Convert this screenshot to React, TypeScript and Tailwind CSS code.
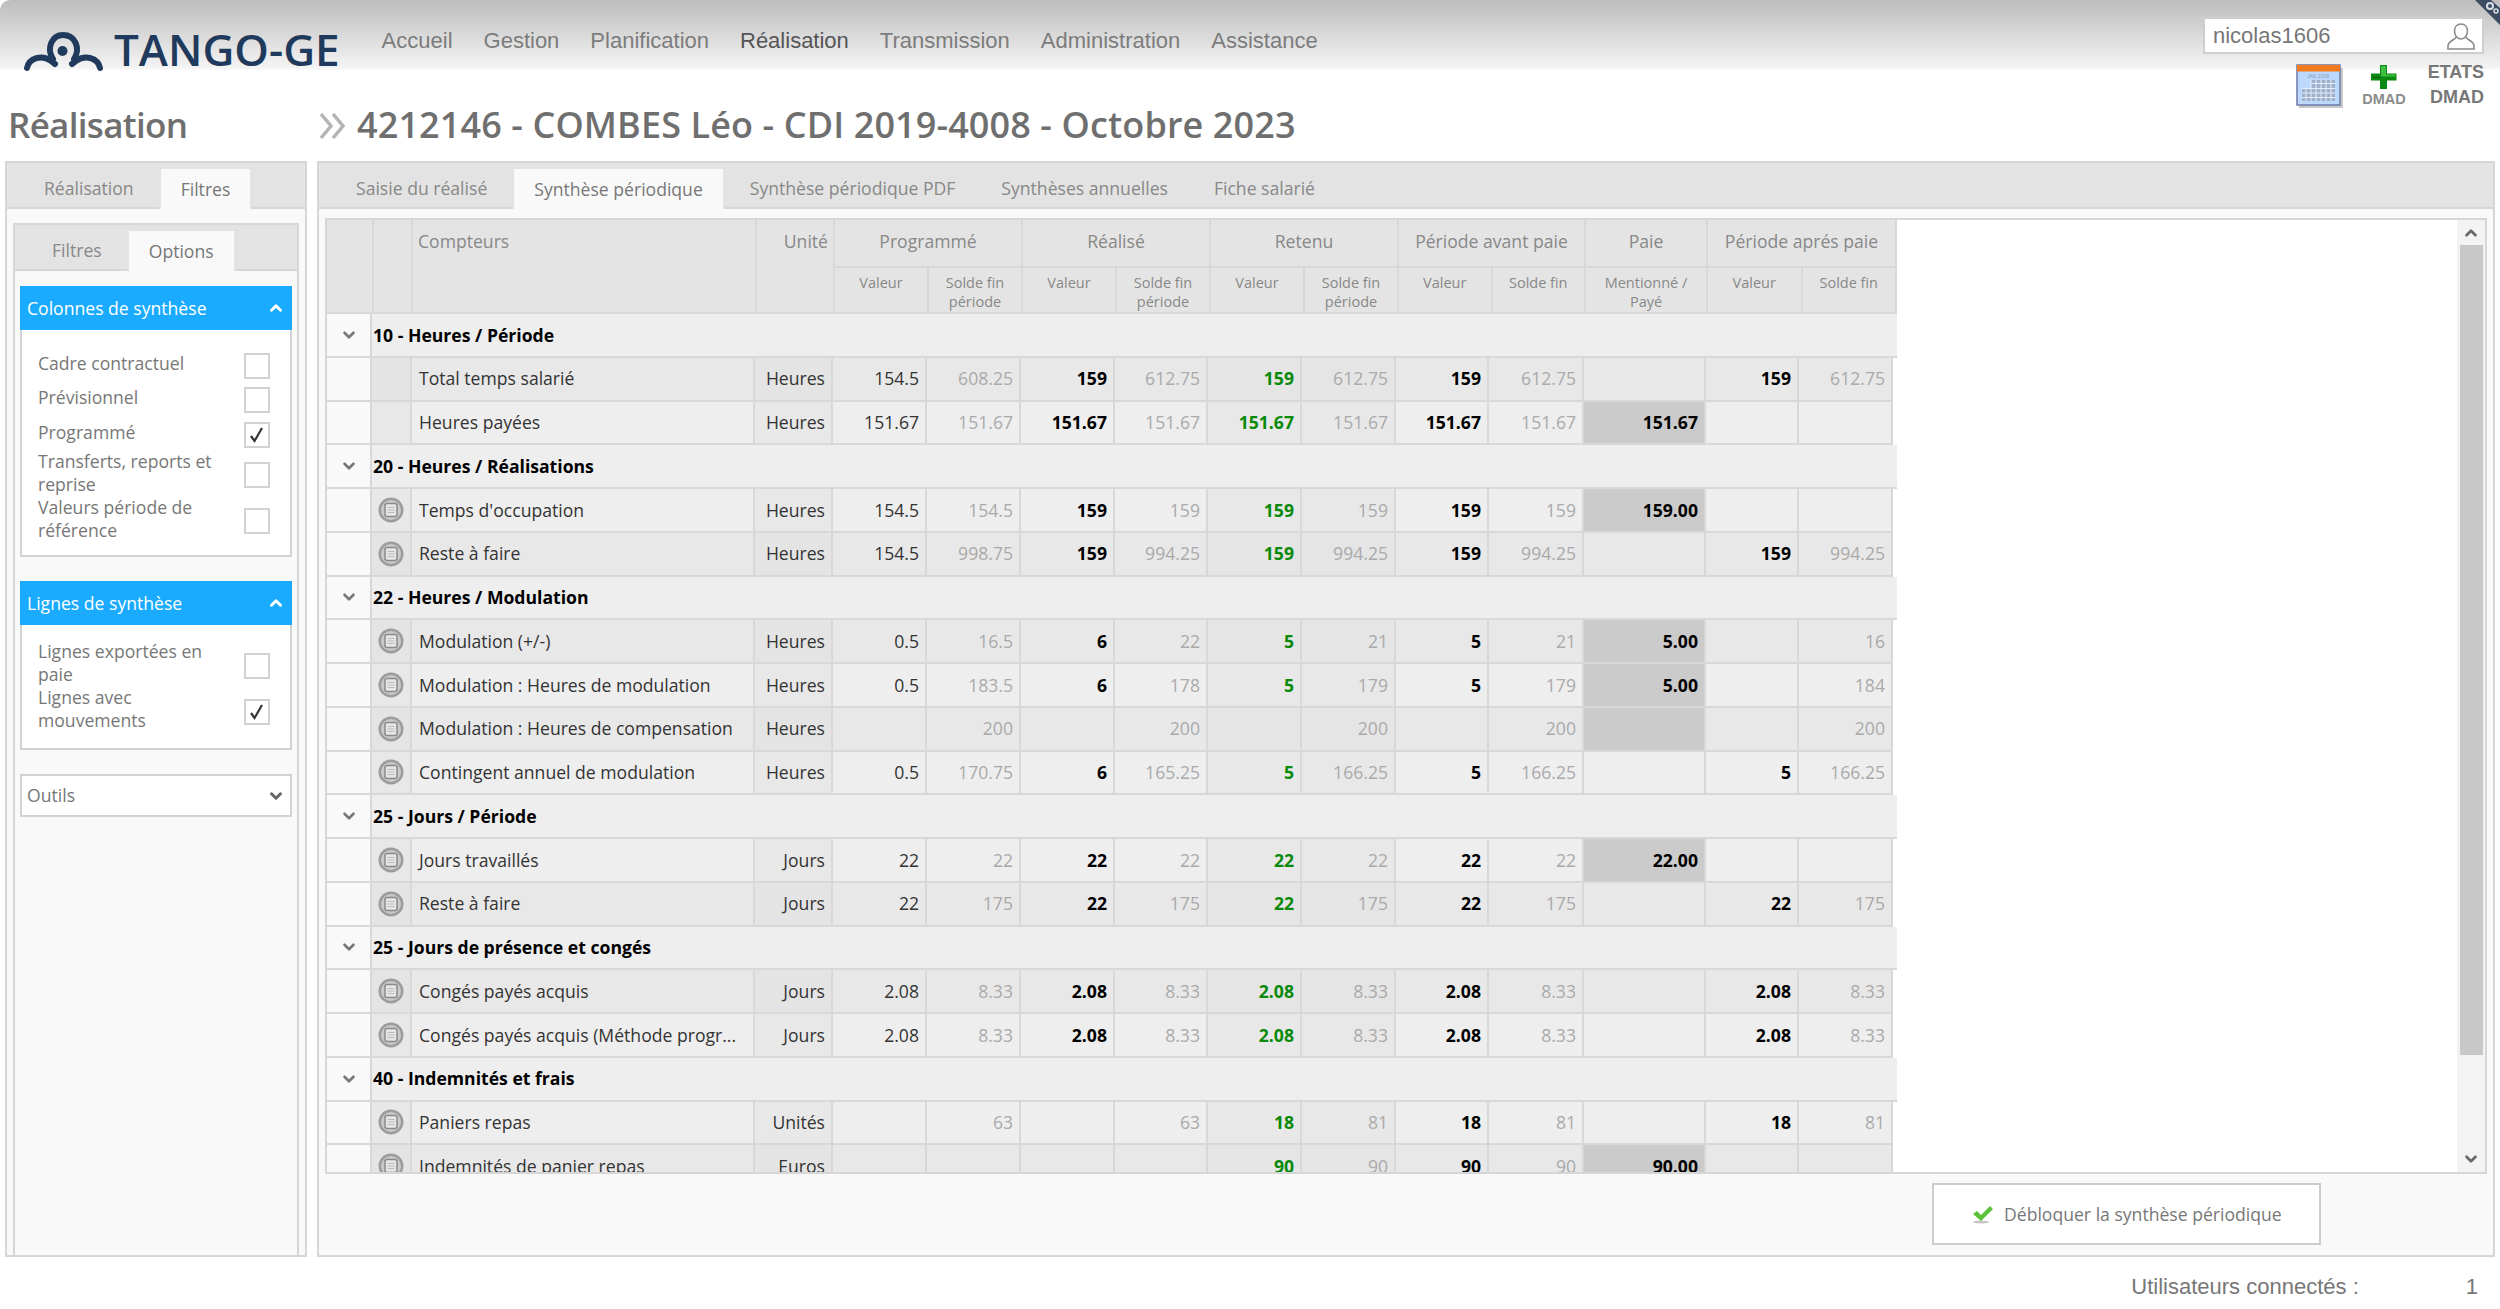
import React from 'react';
import { ChevronDown, ChevronUp } from 'lucide-react';

type Line = {
  icon?: boolean;
  name: string;
  unit: string;
  v: string[];
  paie?: string;
  gray?: boolean;
};

type Group = { title: string; lines: Line[] };

const same = (a: string, b: string) => [a, b, a, b, a, b, a, b, a, b];

const groups: Group[] = [
  {
    title: '10 - Heures / Période',
    lines: [
      { name: 'Total temps salarié', unit: 'Heures', v: ['154.5', '608.25', '159', '612.75', '159', '612.75', '159', '612.75', '159', '612.75'] },
      { name: 'Heures payées', unit: 'Heures', v: ['151.67', '151.67', '151.67', '151.67', '151.67', '151.67', '151.67', '151.67', '', ''], paie: '151.67', gray: true },
    ],
  },
  {
    title: '20 - Heures / Réalisations',
    lines: [
      { icon: true, name: "Temps d'occupation", unit: 'Heures', v: ['154.5', '154.5', '159', '159', '159', '159', '159', '159', '', ''], paie: '159.00', gray: true },
      { icon: true, name: 'Reste à faire', unit: 'Heures', v: ['154.5', '998.75', '159', '994.25', '159', '994.25', '159', '994.25', '159', '994.25'] },
    ],
  },
  {
    title: '22 - Heures / Modulation',
    lines: [
      { icon: true, name: 'Modulation (+/-)', unit: 'Heures', v: ['0.5', '16.5', '6', '22', '5', '21', '5', '21', '', '16'], paie: '5.00', gray: true },
      { icon: true, name: 'Modulation : Heures de modulation', unit: 'Heures', v: ['0.5', '183.5', '6', '178', '5', '179', '5', '179', '', '184'], paie: '5.00', gray: true },
      { icon: true, name: 'Modulation : Heures de compensation', unit: 'Heures', v: ['', '200', '', '200', '', '200', '', '200', '', '200'], gray: true },
      { icon: true, name: 'Contingent annuel de modulation', unit: 'Heures', v: ['0.5', '170.75', '6', '165.25', '5', '166.25', '5', '166.25', '5', '166.25'] },
    ],
  },
  {
    title: '25 - Jours / Période',
    lines: [
      { icon: true, name: 'Jours travaillés', unit: 'Jours', v: ['22', '22', '22', '22', '22', '22', '22', '22', '', ''], paie: '22.00', gray: true },
      { icon: true, name: 'Reste à faire', unit: 'Jours', v: ['22', '175', '22', '175', '22', '175', '22', '175', '22', '175'] },
    ],
  },
  {
    title: '25 - Jours de présence et congés',
    lines: [
      { icon: true, name: 'Congés payés acquis', unit: 'Jours', v: same('2.08', '8.33') },
      { icon: true, name: 'Congés payés acquis (Méthode progr...', unit: 'Jours', v: same('2.08', '8.33') },
    ],
  },
  {
    title: '40 - Indemnités et frais',
    lines: [
      { icon: true, name: 'Paniers repas', unit: 'Unités', v: ['', '63', '', '63', '18', '81', '18', '81', '18', '81'] },
      { icon: true, name: 'Indemnités de panier repas', unit: 'Euros', v: ['', '', '', '', '90', '90', '90', '90', '', ''], paie: '90.00', gray: true },
    ],
  },
];

const headCell = 'border-r-2 border-[#d8d8d8]';
const rowGrid = 'grid w-[1566px] grid-cols-[45px_40px_343px_78px_94px_94px_94px_93px_94px_94px_93px_95px_122px_93px_94px]';

const Logo = () => (
  <svg width="80" height="40" viewBox="0 0 80 40" fill="none">
    <path d="M3 36C5 26 18 22 27 29L31 32" stroke="#1f3a5c" strokeWidth="6" strokeLinecap="round" />
    <path d="M76 36C74 26 61 22 52 29L48 32" stroke="#1f3a5c" strokeWidth="6" strokeLinecap="round" />
    <path d="M29 27C22 16 28 3 39 3C51 3 57 16 50 27" stroke="#1f3a5c" strokeWidth="6" strokeLinecap="round" />
    <circle cx="38.5" cy="19" r="5" fill="#1f3a5c" />
  </svg>
);

const UserIcon = () => (
  <svg width="28" height="28" viewBox="0 0 28 28" fill="none" stroke="#8a8a8a" strokeWidth="1.6">
    <path d="M14 2c-4 0-6.500 3-6.500 7s2.500 8 6.500 8 6.500-4 6.500-8-2.500-7-6.500-7z" />
    <path d="M9 15c0 3-8 3.500-8 9v3h26v-3c0-5.500-8-6-8-9" />
  </svg>
);

const CalendarIcon = () => (
  <svg width="48" height="44" viewBox="0 0 48 44">
    <rect x="3" y="4" width="44" height="40" fill="#c8c8c8" />
    <rect x="1" y="1" width="43" height="40" fill="#bcd9fb" stroke="#6d7aa8" strokeWidth="1.500" />
    <rect x="1" y="1" width="43" height="6.500" fill="#f47a1f" />
    <text x="22" y="14" fontSize="5" fill="#8d9ab5" textAnchor="middle" fontFamily="Liberation Sans">JAN 2008</text>
    <path d="M6 24h29v13H6zM15 16h24v21H15z" fill="#9fb0cc" />
    <path d="M15 19.500h24M6 24.500h33M6 29h33M6 33.500h33M10 24v13M15 16v21M20 16v21M25 16v21M30 16v21M35 16v21" stroke="#e5eefb" strokeWidth="1" />
  </svg>
);

const PlusIcon = () => (
  <svg width="26" height="26" viewBox="0 0 26 26">
    <path d="M9 1h7v8.500h9.500v7H16V25H9v-8.500H0v-7h9z" fill="#0a8a12" />
    <path d="M10 2h5v8.500h9.500v2H10z" fill="#3fbf3f" />
    <path d="M2 14h7.500v-1H2z" fill="#0d5f12" />
  </svg>
);

const CheckIcon = () => (
  <svg width="22" height="20" viewBox="0 0 22 20">
    <ellipse cx="9" cy="18" rx="8" ry="1.500" fill="#c4c4c4" />
    <path d="M1 10l4-3 4 4 9-9 3 3-12 12z" fill="#5cc23a" />
  </svg>
);

const Notebook = () => (
  <svg width="26" height="26" viewBox="0 0 26 26">
    <circle cx="13" cy="13" r="12.500" fill="#9c9c9c" />
    <circle cx="13" cy="13" r="10" fill="#c9c9c9" />
    <rect x="7" y="6.500" width="12" height="13" rx="2" fill="#e6e6e6" stroke="#8a8a8a" strokeWidth="1.500" />
    <path d="M9.500 10.500h7M9.500 13h7M9.500 15.500h7" stroke="#bdbdbd" strokeWidth="1" />
  </svg>
);

const Box = ({ checked }: { checked?: boolean }) => (
  <div className="mt-[5px] flex h-[26px] w-[26px] shrink-0 items-center justify-center border-2 border-[#d2d2d2] bg-white">
    {checked && (
      <svg width="18" height="18" viewBox="0 0 18 18" fill="none">
        <path d="M3 10l3.500 5L14 2" stroke="#333" strokeWidth="2.200" />
      </svg>
    )}
  </div>
);

const Option = ({ label, checked, tall }: { label: string; checked?: boolean; tall?: boolean }) => (
  <div className={tall ? 'flex h-[46px] items-center justify-between pl-[16px] pr-[20px]' : 'flex h-[34.5px] items-center justify-between pl-[16px] pr-[20px]'}>
    <span className="w-[185px] leading-[23px]">{label}</span>
    <Box checked={checked} />
  </div>
);

const SectionHead = ({ title }: { title: string }) => (
  <div className="flex h-[44px] items-center justify-between bg-[#1aabff] pl-[7px] pr-[7px] text-white">
    <span>{title}</span>
    <ChevronUp size={18} strokeWidth={4} />
  </div>
);

const Tab = ({ label, active }: { label: string; active?: boolean }) =>
  active ? (
    <div className="-mb-[2px] flex h-[42px] items-center border-2 border-b-0 border-[#e3e3e3] bg-[#f9f9f9] px-[20px] text-[#777]">{label}</div>
  ) : (
    <div className="-mb-[2px] flex h-[42px] items-center px-[21px] text-[#888]">{label}</div>
  );

const Cell = ({ text, className }: { text: string; className: string }) => (
  <div className={`flex items-center justify-end border-r-2 border-[#d8d8d8] pr-[6px] ${className}`}>{text}</div>
);

const TableRow = ({ line, dark }: { line: Line; dark: boolean }) => {
  const bg = dark ? 'bg-[#e8e8e8]' : 'bg-[#eeeeee]';
  const side = dark ? 'bg-[#e4e4e4]' : 'bg-[#e8e8e8]';
  const retenu = dark ? 'bg-[#e5e5e5]' : 'bg-[#e8e8e8]';
  const v = line.v;
  const plain = `${bg} text-[#333]`;
  const soft = `${bg} text-[#aaaaaa]`;
  const strong = `${bg} font-bold text-black`;
  return (
    <div className={`${rowGrid} h-[43.75px] shrink-0 border-b-2 border-[#d8d8d8]`}>
      <div className="border-r-2 border-[#d8d8d8] bg-[#f9f9f9]" />
      <div className={`flex items-center justify-center border-r-2 border-[#d8d8d8] ${side}`}>{line.icon && <Notebook />}</div>
      <div className={`flex items-center overflow-hidden whitespace-nowrap border-r-2 border-[#d8d8d8] pl-[7px] text-[#333] ${bg}`}>{line.name}</div>
      <Cell text={line.unit} className={`${side} text-[#333]`} />
      <Cell text={v[0]} className={plain} />
      <Cell text={v[1]} className={soft} />
      <Cell text={v[2]} className={strong} />
      <Cell text={v[3]} className={soft} />
      <Cell text={v[4]} className={`${retenu} font-bold text-[#0a8a0a]`} />
      <Cell text={v[5]} className={`${retenu} text-[#aaaaaa]`} />
      <Cell text={v[6]} className={strong} />
      <Cell text={v[7]} className={soft} />
      <Cell text={line.paie ?? ''} className={line.gray ? 'bg-[#cbcbcb] font-bold text-black' : strong} />
      <Cell text={v[8]} className={strong} />
      <Cell text={v[9]} className={soft} />
    </div>
  );
};

const GroupRow = ({ title }: { title: string }) => (
  <div className="flex h-[43.75px] w-[1570px] shrink-0 border-b-2 border-[#d8d8d8] font-bold text-black">
    <div className="flex w-[45px] shrink-0 items-center justify-center border-r-2 border-[#d8d8d8] bg-[#f9f9f9] text-[#777]">
      <ChevronDown size={18} strokeWidth={3.5} />
    </div>
    <div className="flex flex-1 items-center bg-[#eeeeee] pl-[1px]">{title}</div>
  </div>
);

const HeadGroup = ({ label, subs, w }: { label: string; subs: React.ReactNode[]; w: string }) => (
  <div className={`flex shrink-0 flex-col ${w} ${headCell}`}>
    <div className="flex h-[48px] items-center justify-center border-b-2 border-[#d8d8d8] pb-[4px]">{label}</div>
    <div className="flex flex-1 text-[14.5px] leading-[19px]">
      {subs.map((s, i) => (
        <div key={i} className={i === subs.length - 1 ? 'flex-1 pt-[5px] text-center' : 'flex-1 border-r-2 border-[#d8d8d8] pt-[5px] text-center'}>
          {s}
        </div>
      ))}
    </div>
  </div>
);

const solde = (
  <>
    Solde fin
    <br />
    période
  </>
);

export default function App() {
  let idx = 0;
  return (
    <div className="relative flex h-[1309px] w-[2500px] flex-col overflow-hidden bg-white font-['Open_Sans',sans-serif] text-[17.6px] text-[#777]">
      {/* Header */}
      <div className="flex h-[105px] shrink-0 items-start rounded-tl-[10px] bg-[linear-gradient(to_bottom,#bdbdbd,#f4f4f4_68px,#ffffff_71px)]">
        <div className="ml-[24px] mt-[32px] flex h-[40px] items-center gap-[10px]">
          <Logo />
          <span className="-mt-[6px] text-[44px] font-semibold leading-none text-[#1f3a5c]">TANGO-GE</span>
        </div>
        <nav className="ml-[42px] mt-[27px] flex gap-[31px] font-['Liberation_Sans',sans-serif] text-[22px] leading-[28px] text-[#7c7c7c]">
          <span>Accueil</span>
          <span>Gestion</span>
          <span>Planification</span>
          <span className="text-[#555]">Réalisation</span>
          <span>Transmission</span>
          <span>Administration</span>
          <span>Assistance</span>
        </nav>
        <div className="ml-auto mr-[16px] mt-[17px] w-[281px] font-['Liberation_Sans',sans-serif]">
          <div className="flex h-[37px] items-center justify-between border-2 border-[#cfcfcf] bg-white pl-[8px] pr-[7px] text-[22px] text-[#777]">
            <span>nicolas1606</span>
            <UserIcon />
          </div>
          <div className="mt-[10px] flex items-start justify-end gap-[18px]">
            <CalendarIcon />
            <div className="flex w-[44px] flex-col items-center">
              <PlusIcon />
              <span className="mt-[1px] text-[14.5px] font-bold leading-[16px] text-[#8c8c8c]">DMAD</span>
            </div>
            <div className="-mt-[4px] w-[60px] text-right text-[18px] font-bold leading-[25px] text-[#777]">
              <div>ETATS</div>
              <div>DMAD</div>
            </div>
          </div>
        </div>
      </div>

      {/* Title */}
      <div className="flex h-[56px] shrink-0 items-start font-semibold leading-[40px] text-[#6f6f6f]">
        <div className="w-[319px] pl-[8px] text-[35px] tracking-[-0.02em]">Réalisation</div>
        <svg className="mt-[8px] shrink-0" width="28" height="26" viewBox="0 0 28 26" fill="none" stroke="#b5b5b5" strokeWidth="3.500">
          <path d="M2 1l10 12L2 25M14 1l10 12-10 12" />
        </svg>
        <div className="ml-[10px] whitespace-nowrap text-[36px] tracking-[0.003em]">4212146 - COMBES Léo - CDI 2019-4008 - Octobre 2023</div>
      </div>

      {/* Main */}
      <div className="flex h-[1096px] shrink-0 gap-[10px] px-[5px]">
        {/* Left panel */}
        <div className="flex w-[302px] shrink-0 flex-col border-2 border-[#d6d6d6] bg-[#f9f9f9]">
          <div className="flex h-[46px] shrink-0 items-end gap-[4px] border-b-2 border-[#d6d6d6] bg-[#e3e3e3] pl-[16px]">
            <Tab label="Réalisation" />
            <Tab label="Filtres" active />
          </div>
          <div className="mx-[6px] mt-[14px] flex flex-1 flex-col border-2 border-b-0 border-[#d6d6d6]">
            <div className="flex h-[46px] shrink-0 items-end gap-[4px] border-b-2 border-[#d6d6d6] bg-[#e3e3e3] pl-[16px]">
              <Tab label="Filtres" />
              <Tab label="Options" active />
            </div>
            <div className="flex flex-col gap-[24px] px-[5px] pt-[15px]">
              <div>
                <SectionHead title="Colonnes de synthèse" />
                <div className="h-[227px] border-2 border-t-0 border-[#d2d2d2] bg-white pt-[16px]">
                  <Option label="Cadre contractuel" />
                  <Option label="Prévisionnel" />
                  <Option label="Programmé" checked />
                  <Option label="Transferts, reports et reprise" tall />
                  <Option label="Valeurs période de référence" tall />
                </div>
              </div>
              <div>
                <SectionHead title="Lignes de synthèse" />
                <div className="h-[125px] border-2 border-t-0 border-[#d2d2d2] bg-white pt-[15px]">
                  <Option label="Lignes exportées en paie" tall />
                  <Option label="Lignes avec mouvements" checked tall />
                </div>
              </div>
              <div className="flex h-[43px] items-center justify-between border-2 border-[#d2d2d2] bg-white pl-[5px] pr-[5px]">
                <span>Outils</span>
                <ChevronDown size={18} strokeWidth={4} className="text-[#666]" />
              </div>
            </div>
          </div>
        </div>

        {/* Right panel */}
        <div className="flex min-w-0 flex-1 flex-col border-2 border-[#d6d6d6] bg-[#f9f9f9]">
          <div className="flex h-[46px] shrink-0 items-end gap-[4px] border-b-2 border-[#d6d6d6] bg-[#e3e3e3] pl-[16px]">
            <Tab label="Saisie du réalisé" />
            <Tab label="Synthèse périodique" active />
            <Tab label="Synthèse périodique PDF" />
            <Tab label="Synthèses annuelles" />
            <Tab label="Fiche salarié" />
          </div>
          <div className="mx-[6px] mt-[9px] flex h-[956px] shrink-0 border-2 border-[#d6d6d6] bg-white">
            <div className="flex min-w-0 flex-1 flex-col overflow-hidden">
              <div className="flex h-[94px] w-[1570px] shrink-0 border-b-2 border-[#d8d8d8] bg-[#e4e4e4] text-[#888]">
                <div className={`w-[47px] shrink-0 ${headCell}`} />
                <div className={`w-[39px] shrink-0 ${headCell}`} />
                <div className={`w-[344px] shrink-0 pl-[5px] pt-[8px] ${headCell}`}>Compteurs</div>
                <div className={`w-[78px] shrink-0 pr-[5px] pt-[8px] text-right ${headCell}`}>Unité</div>
                <HeadGroup label="Programmé" subs={['Valeur', solde]} w="w-[188px]" />
                <HeadGroup label="Réalisé" subs={['Valeur', solde]} w="w-[188px]" />
                <HeadGroup label="Retenu" subs={['Valeur', solde]} w="w-[188px]" />
                <HeadGroup label="Période avant paie" subs={['Valeur', 'Solde fin']} w="w-[187px]" />
                <HeadGroup
                  label="Paie"
                  subs={[
                    <React.Fragment key="p">
                      Mentionné /
                      <br />
                      Payé
                    </React.Fragment>,
                  ]}
                  w="w-[122px]"
                />
                <HeadGroup label="Période aprés paie" subs={['Valeur', 'Solde fin']} w="w-[189px]" />
              </div>
              {groups.map(g => (
                <React.Fragment key={g.title}>
                  {(() => {
                    idx += 1;
                    return <GroupRow title={g.title} />;
                  })()}
                  {g.lines.map(l => {
                    idx += 1;
                    return <TableRow key={l.name} line={l} dark={idx % 2 === 0} />;
                  })}
                </React.Fragment>
              ))}
            </div>
            {/* Scrollbar */}
            <div className="flex w-[28px] shrink-0 flex-col items-center bg-[#f3f3f3] text-[#666]">
              <ChevronUp size={18} strokeWidth={3.5} className="mt-[4px] h-[18px] shrink-0" />
              <div className="mt-[3px] h-[810px] w-[23px] bg-[#c8c8c8]" />
              <ChevronDown size={18} strokeWidth={3.5} className="mt-auto mb-[4px]" />
            </div>
          </div>
          <div className="mt-[9px] flex justify-end pr-[172px]">
            <div className="flex h-[62px] w-[389px] items-center gap-[10px] border-2 border-[#cccccc] bg-white pl-[38px] text-[#777]">
              <CheckIcon />
              <span className="whitespace-nowrap">Débloquer la synthèse périodique</span>
            </div>
          </div>
        </div>
      </div>

      {/* Footer */}
      <div className="flex justify-end gap-[107px] pr-[22px] pt-[16px] font-['Liberation_Sans',sans-serif] text-[22px] leading-[28px] text-[#777]">
        <span>Utilisateurs connectés :</span>
        <span>1</span>
      </div>

      {/* Corner ribbon */}
      <svg className="absolute right-0 top-0" width="25" height="25" viewBox="0 0 25 25">
        <path d="M0 0H16L25 8V25Z" fill="#3d4b63" />
        <circle cx="15" cy="6" r="3" fill="none" stroke="#d9dde4" strokeWidth="2" />
        <circle cx="21" cy="11" r="2" fill="none" stroke="#d9dde4" strokeWidth="1.500" />
      </svg>
    </div>
  );
}
